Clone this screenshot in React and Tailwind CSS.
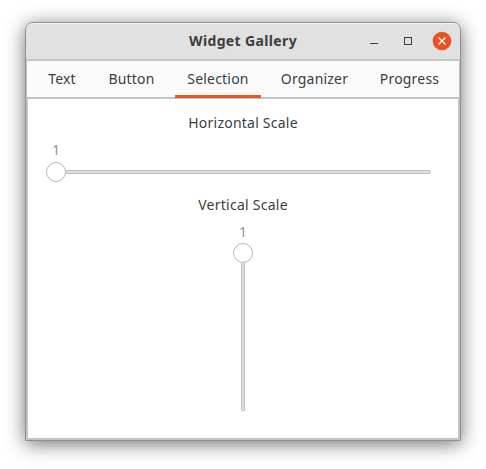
const tabs = [
  { name: 'Text', box: 'w-[52px]' },
  { name: 'Button', box: 'w-[69px]' },
  { name: 'Selection', box: 'w-[86px]' },
  { name: 'Organizer', box: 'w-[89px]' },
  { name: 'Progress', box: 'w-[83px]' },
];

function TitleBar() {
  return (
    <header className="flex h-[36px] shrink-0 items-center rounded-t-[7px] border-t border-[#f6f6f6] bg-[#e1e1e1]">
      <div className="w-[100px]" />
      <h1 className="flex-1 pb-px text-center text-[14px] leading-5 font-bold tracking-[0.36px] whitespace-nowrap">
        Widget Gallery
      </h1>
      <div className="flex w-[100px] items-center justify-end pr-[8px]">
        <svg width="86" height="35" viewBox="0 0 86 35" fill="none">
          <path d="M4 19.5h8" stroke="#3d3d3d" />
          <rect x="38.5" y="13.5" width="7" height="7" stroke="#3d3d3d" />
          <circle cx="76" cy="17" r="9.3" fill="#e95420" />
          <path d="M72.5 13.5l7 7M79.5 13.5l-7 7" stroke="#fff" strokeWidth="1.3" />
        </svg>
      </div>
    </header>
  );
}

function Thumb() {
  return <span className="block size-[20px] shrink-0 rounded-full border border-[#b8b8b8] bg-white" />;
}

function HorizontalScale() {
  return (
    <div className="mt-[7px] ml-[18px] flex w-[385px] flex-col self-start">
      <p className="h-5 w-[20px] text-center text-[#929292]">1</p>
      <div className="mt-[2px] flex h-[20px] items-center">
        <Thumb />
        <span className="h-[4px] flex-1 rounded-r-[2px] border border-l-0 border-[#c0c0c0] bg-[#dedede]" />
      </div>
    </div>
  );
}

function VerticalScale() {
  return (
    <div className="mt-[7px] flex h-[189px] flex-col items-center">
      <p className="h-5 shrink-0 text-center text-[#929292]">1</p>
      <div className="mt-px flex flex-1 flex-col items-center">
        <Thumb />
        <span className="w-[4px] flex-1 rounded-b-[2px] border border-t-0 border-[#c0c0c0] bg-[#dedede]" />
      </div>
    </div>
  );
}

export default function App() {
  return (
    <div className="h-[469px] w-[486px] overflow-hidden bg-white pt-[22px] pl-[25px] font-['Noto_Sans',sans-serif] text-[14px] leading-5 tracking-[0.2px] text-[#3d3d3d]">
      <main className="flex h-[419px] w-[436px] flex-col rounded-t-[8px] border border-[#8f8f8f] bg-[#c4c4c4] shadow-[0_3px_19px_rgba(0,0,0,0.56)]">
        <TitleBar />
        <nav className="mx-px mt-[2px] flex h-[36px] shrink-0 gap-[9px] bg-[#fafafa] pl-[9px]">
          {tabs.map((t) => (
            <button key={t.name} className={`${t.box} relative h-[36px] shrink-0 text-center whitespace-nowrap`}>
              {t.name}
              {t.name === 'Selection' && <span className="absolute bottom-[-1px] left-0 h-[3px] w-full bg-[#e95420]" />}
            </button>
          ))}
        </nav>
        <section className="mx-[2px] mt-[2px] mb-[2px] flex flex-1 flex-col items-center bg-white pt-[14px]">
          <p className="tracking-[0.23px] whitespace-nowrap">Horizontal Scale</p>
          <HorizontalScale />
          <p className="mt-[13px] tracking-[0.26px] whitespace-nowrap">Vertical Scale</p>
          <VerticalScale />
        </section>
      </main>
    </div>
  );
}
